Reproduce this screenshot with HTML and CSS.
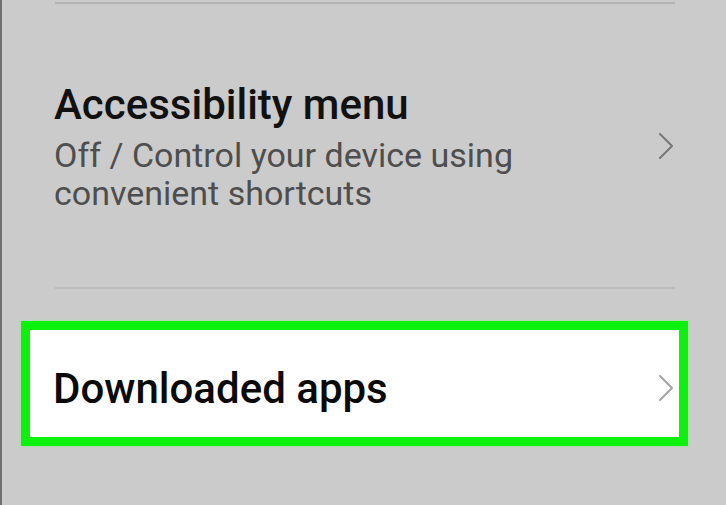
FILE: index.html
```html
<!DOCTYPE html>
<html lang="en">
<head>
<meta charset="utf-8">
<title>Settings</title>
<link rel="stylesheet" href="styles.css">
</head>
<body>
<div class="screen">
  <div class="divider top"></div>
  <div class="row access">
    <div class="text">
      <div class="title">Accessibility menu</div>
      <div class="sub">Off / Control your device using<br>convenient shortcuts</div>
    </div>
    <svg class="chev dark" width="18" height="28" viewBox="0 0 18 28"><polyline points="3,1 15,13 3,25"/></svg>
  </div>
  <div class="divider"></div>
  <div class="highlight">
    <div class="row apps">
      <div class="title">Downloaded apps</div>
      <svg class="chev light" width="18" height="28" viewBox="0 0 18 28"><polyline points="3,1 15,13 3,25"/></svg>
    </div>
  </div>
</div>
</body>
</html>
```

FILE: styles.css
```css
* { box-sizing: border-box; }
html, body { margin: 0; padding: 0; }
body { background: #cbcbcb; }
.screen {
  min-height: 505px;
  background: #cbcbcb;
  border-left: 2px solid #707070;
  font-family: Roboto, "Noto Sans", sans-serif;
  display: flex;
  flex-direction: column;
}
.divider {
  height: 2px;
  margin: 0 51px 0 53px;
  background: #bcbcbc;
}
.divider.top {
  margin-top: 2px;
  background: #b3b3b3;
}
.row {
  display: flex;
  align-items: center;
}
.text { flex: 1; }
.access { padding: 77px 51px 75px 52px; }
.title {
  font-size: 42px;
  line-height: 48px;
  font-weight: 500;
  color: #111;
  flex: 1;
}
.sub {
  margin-top: 7px;
  font-size: 34px;
  line-height: 38px;
  color: #4e4e4e;
}
.chev { flex: none; }
.chev polyline { fill: none; stroke-width: 2; stroke-linecap: round; stroke-linejoin: round; }
.chev.dark polyline { stroke: #777; }
.chev.light polyline { stroke: #a3a3a3; }
.highlight {
  margin: 32px 0 0 19px;
  width: 667px;
  border: 9px solid #0cf20c;
  background: #fff;
  box-shadow: 0 0 2px #7ef57e;
}
.apps { padding: 35px 4px 24px 23px; }
.apps .title { color: #0a0a0a; }
```
